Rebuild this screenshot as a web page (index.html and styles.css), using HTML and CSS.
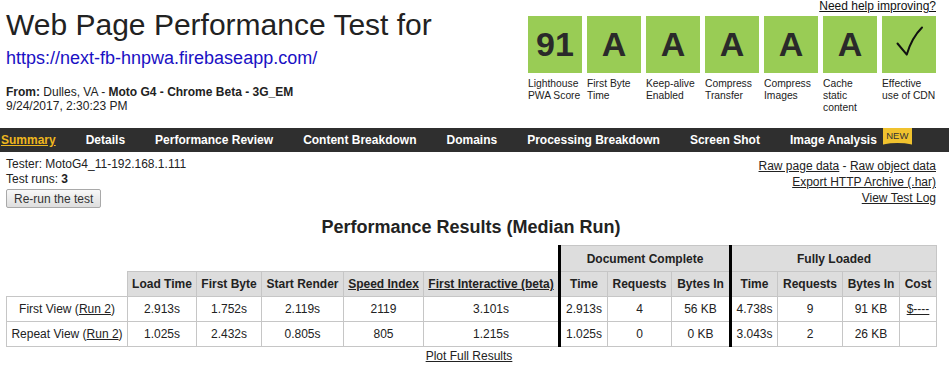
FILE: index.html
```html
<!DOCTYPE html>
<html>
<head>
<meta charset="utf-8">
<title>WebPageTest Test Result</title>
<link rel="stylesheet" href="styles.css">
</head>
<body>
<header class="head">
  <div class="head-left">
    <h1 class="title">Web Page Performance Test for</h1>
    <a class="url" href="#">https://next-fb-hnpwa.firebaseapp.com/</a>
    <div class="from"><b>From:</b> Dulles, VA - <b>Moto G4 - Chrome Beta - 3G_EM</b></div>
    <div class="date">9/24/2017, 2:30:23 PM</div>
  </div>
  <div class="head-right">
    <a class="help" href="#">Need help improving?</a>
    <ul class="grades">
      <li class="grade"><div class="box">91</div><div class="label">Lighthouse PWA Score</div></li>
      <li class="grade"><div class="box">A</div><div class="label">First Byte Time</div></li>
      <li class="grade"><div class="box">A</div><div class="label">Keep-alive Enabled</div></li>
      <li class="grade"><div class="box">A</div><div class="label">Compress Transfer</div></li>
      <li class="grade"><div class="box">A</div><div class="label">Compress Images</div></li>
      <li class="grade"><div class="box">A</div><div class="label">Cache static content</div></li>
      <li class="grade"><div class="box check"><svg width="54" height="57" viewBox="0 0 54 57"><path d="M15.5 27.5 L24.8 38.6 Q29.5 22 40 11.5" fill="none" stroke="#111" stroke-width="2" stroke-linecap="round" stroke-linejoin="round"/></svg></div><div class="label">Effective use of CDN</div></li>
    </ul>
  </div>
</header>

<nav class="nav">
  <a class="nav-item active" href="#">Summary</a>
  <a class="nav-item" href="#">Details</a>
  <a class="nav-item" href="#">Performance Review</a>
  <a class="nav-item" href="#">Content Breakdown</a>
  <a class="nav-item" href="#">Domains</a>
  <a class="nav-item" href="#">Processing Breakdown</a>
  <a class="nav-item" href="#">Screen Shot</a>
  <a class="nav-item" href="#">Image Analysis</a>
  <span class="badge">NEW</span>
</nav>

<section class="info">
  <div class="info-left">
    <div class="line">Tester: MotoG4_11-192.168.1.111</div>
    <div class="line">Test runs: <b>3</b></div>
    <button class="btn">Re-run the test</button>
  </div>
  <div class="info-right">
    <div class="rline"><a href="#">Raw page data</a> - <a href="#">Raw object data</a></div>
    <div class="rline"><a href="#">Export HTTP Archive (.har)</a></div>
    <div class="rline"><a href="#">View Test Log</a></div>
  </div>
</section>

<h2 class="results-title">Performance Results (Median Run)</h2>

<div class="table-wrap">
<table class="results">
  <colgroup>
    <col class="c1"><col class="c2"><col class="c3"><col class="c4"><col class="c5"><col class="c6">
    <col class="c7"><col class="c8"><col class="c9">
    <col class="c10"><col class="c11"><col class="c12"><col class="c13">
  </colgroup>
  <tr class="hrow1">
    <th class="empty" colspan="6"></th>
    <th class="sep" colspan="3">Document Complete</th>
    <th class="sep" colspan="4">Fully Loaded</th>
  </tr>
  <tr class="hrow2">
    <th class="empty"></th>
    <th>Load Time</th>
    <th>First Byte</th>
    <th>Start Render</th>
    <th><a href="#">Speed Index</a></th>
    <th><a href="#">First Interactive (beta)</a></th>
    <th class="sep">Time</th>
    <th>Requests</th>
    <th>Bytes In</th>
    <th class="sep">Time</th>
    <th>Requests</th>
    <th>Bytes In</th>
    <th>Cost</th>
  </tr>
  <tr>
    <td>First View (<a href="#">Run 2</a>)</td>
    <td>2.913s</td>
    <td>1.752s</td>
    <td>2.119s</td>
    <td>2119</td>
    <td>3.101s</td>
    <td class="sep">2.913s</td>
    <td>4</td>
    <td>56 KB</td>
    <td class="sep">4.738s</td>
    <td>9</td>
    <td>91 KB</td>
    <td><a href="#">$----</a></td>
  </tr>
  <tr>
    <td>Repeat View (<a href="#">Run 2</a>)</td>
    <td>1.025s</td>
    <td>2.432s</td>
    <td>0.805s</td>
    <td>805</td>
    <td>1.215s</td>
    <td class="sep">1.025s</td>
    <td>0</td>
    <td>0 KB</td>
    <td class="sep">3.043s</td>
    <td>2</td>
    <td>26 KB</td>
    <td></td>
  </tr>
</table>
</div>
<p class="plot"><a class="plot-link" href="#">Plot Full Results</a></p>
</body>
</html>
```
FILE: styles.css
```css
html, body {
  margin: 0;
  padding: 0;
  background: #fff;
}
body {
  font-family: "Liberation Sans", Arial, sans-serif;
  font-size: 12px;
  color: #222;
}
a {
  color: #222;
}

/* header */
.head {
  display: flex;
  justify-content: space-between;
  padding: 0 13px 0 6px;
  height: 128px;
  box-sizing: border-box;
}
.head-left {
  padding-top: 8px;
}
.title {
  margin: 0;
  font-size: 30px;
  font-weight: normal;
  line-height: 34px;
  color: #222;
}
.url {
  display: block;
  margin-top: 6px;
  font-size: 18px;
  line-height: 21px;
  color: #1a10c4;
  text-decoration: none;
}
.from {
  margin-top: 16px;
  font-size: 12px;
  line-height: 14px;
}
.date {
  font-size: 12px;
  line-height: 14px;
}
.head-right {
  display: flex;
  flex-direction: column;
  align-items: flex-end;
}
.help {
  font-size: 12px;
  line-height: 12px;
  color: #111;
}
.grades {
  display: flex;
  gap: 5px;
  list-style: none;
  margin: 4px 0 0;
  padding: 0;
}
.grade {
  width: 54px;
}
.box {
  height: 57px;
  background: #99cc55;
  color: #2a2a2a;
  font-weight: bold;
  font-size: 34px;
  line-height: 57px;
  text-align: center;
}
.box svg {
  display: block;
}
.label {
  margin-top: 5px;
  font-size: 10.3px;
  line-height: 12px;
  color: #222;
}

/* nav */
.nav {
  display: flex;
  align-items: center;
  gap: 30px;
  height: 24px;
  padding-left: 1px;
  background: #2f2f2f;
}
.nav-item {
  color: #fff;
  font-weight: bold;
  font-size: 12px;
  line-height: 24px;
  text-decoration: none;
}
.nav-item.active {
  color: #efb71e;
  text-decoration: underline;
}
.badge {
  position: relative;
  align-self: flex-start;
  margin-left: -24px;
  width: 29px;
  height: 18px;
  background: #f0c22e;
  color: #333;
  font-size: 9.5px;
  line-height: 16px;
  text-align: center;
  overflow: hidden;
}
.badge::after {
  content: "";
  position: absolute;
  left: -4px;
  right: -4px;
  top: 15px;
  height: 8px;
  border-radius: 50%;
  background: #2f2f2f;
}

/* info */
.info {
  display: flex;
  justify-content: space-between;
  padding: 5px 13px 0 6px;
}
.line {
  line-height: 15px;
}
.btn {
  margin-top: 2px;
  height: 19px;
  padding: 0 7px;
  font-family: "Liberation Sans", Arial, sans-serif;
  font-size: 12px;
  color: #333;
  background: linear-gradient(#f8f8f8, #dedede);
  border: 1px solid #a9a9a9;
  border-radius: 2px;
}
.info-right {
  text-align: right;
  padding-top: 1px;
}
.rline {
  line-height: 16px;
}

/* results */
.results-title {
  margin: 9px 0 7px;
  text-align: center;
  font-size: 18px;
  line-height: 21px;
  font-weight: bold;
  color: #222;
  width: 942px;
}
.table-wrap {
  padding-left: 6px;
  width: 932px;
}
.results {
  width: 930px;
  table-layout: fixed;
  border-collapse: collapse;
  font-size: 12px;
}
.c1 { width: 121px; }
.c2 { width: 69px; }
.c3 { width: 65px; }
.c4 { width: 82px; }
.c5 { width: 80px; }
.c6 { width: 136px; }
.c7 { width: 48px; }
.c8 { width: 64px; }
.c9 { width: 59px; }
.c10 { width: 47px; }
.c11 { width: 65px; }
.c12 { width: 57px; }
.c13 { width: 37px; }
.results th,
.results td {
  border: 1px solid #c6c6c6;
  text-align: center;
  padding: 5px 0;
  line-height: 14px;
  white-space: nowrap;
}
.results td {
  background: #fff;
}
.results th {
  background: #dddddd;
  font-weight: bold;
}
.hrow1 th {
  padding: 6px 0 5px;
}
.results th.empty {
  background: transparent;
  border: none;
}
.results .sep {
  border-left: 3px solid #000;
}
.plot {
  margin: 0 0 0 4px;
  width: 930px;
  display: flex;
  justify-content: center;
  line-height: 14px;
  padding-top: 2px;
}
.plot-link {
  color: #222;
}
```
